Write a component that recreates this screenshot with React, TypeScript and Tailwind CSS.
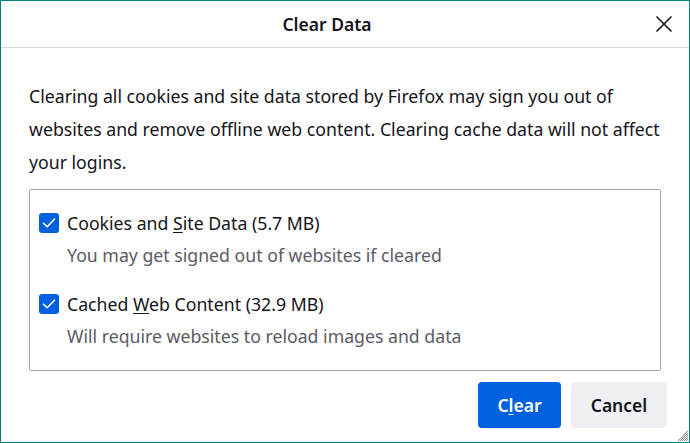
import React from "react";

function Check() {
  return (
    <span className="flex h-[20px] w-[20px] shrink-0 items-center justify-center rounded-[3px] bg-[#0061e0]">
      <svg width="16" height="16" viewBox="0 0 16 16" fill="none">
        <path d="M2.5 8.2 L6.2 11.8 L13.5 4.2" stroke="white" strokeWidth="1.6" strokeLinecap="round" strokeLinejoin="round" />
      </svg>
    </span>
  );
}

export default function App() {
  return (
    <div
      className="relative flex h-[443px] w-[690px] flex-col border border-[#008080] bg-white text-[#15141a]"
      style={{ fontFamily: '"Noto Sans", "Open Sans", sans-serif' }}
    >
      <div className="relative flex h-[47px] shrink-0 items-center justify-center border-b border-[#d7d7db] pr-[36px]">
        <span className="text-[17.5px] font-semibold">Clear Data</span>
        <button className="absolute right-[14px] top-[12px] flex h-[22px] w-[22px] items-center justify-center">
          <svg width="18" height="18" viewBox="0 0 18 18" fill="none">
            <path d="M1.5 1.5 L16.5 16.5 M16.5 1.5 L1.5 16.5" stroke="#15141a" strokeWidth="1.6" />
          </svg>
        </button>
      </div>
      <div className="flex flex-1 flex-col px-[28px] pt-[32px]">
        <p className="text-[17.7px] leading-[33px]">
          Clearing all cookies and site data stored by Firefox may sign you out of websites and remove offline web content. Clearing cache data will not affect your logins.
        </p>
        <div className="mt-[10px] flex h-[182px] flex-col rounded-[2px] border border-[#a8a8ac] pl-[9px] pt-[21px]">
          <div className="flex items-center gap-[8px]">
            <Check />
            <span className="text-[17.7px] leading-[24px]">
              Cookies and <u className="underline-offset-2">S</u>ite Data (5.7 MB)
            </span>
          </div>
          <div className="mt-[8px] pl-[28px] text-[17.7px] leading-[24px] text-[#5b5b66]">
            You may get signed out of websites if cleared
          </div>
          <div className="mt-[25px] flex items-center gap-[8px]">
            <Check />
            <span className="text-[17.7px] leading-[24px]">
              Cached <u className="underline-offset-2">W</u>eb Content (32.9 MB)
            </span>
          </div>
          <div className="mt-[8px] pl-[28px] text-[17.7px] leading-[24px] text-[#5b5b66]">
            Will require websites to reload images and data
          </div>
        </div>
        <div className="mt-[11px] flex justify-end gap-[10px]">
          <button className="h-[46px] w-[83px] rounded-[4px] bg-[#0061e0] text-[17.5px] font-semibold text-white">
            C<u className="underline-offset-2">l</u>ear
          </button>
          <button className="mr-[-6px] h-[46px] w-[96px] rounded-[4px] bg-[#f0f0f4] text-[17.5px] font-semibold text-[#15141a]">
            Cancel
          </button>
        </div>
      </div>
      <svg className="absolute bottom-0 right-0" width="14" height="14" viewBox="0 0 14 14">
        <path d="M13 3 L3 13 M13 7 L7 13 M13 11 L11 13 M13 5 L5 13 M13 9 L9 13" stroke="#8a8a8a" strokeWidth="1" />
      </svg>
    </div>
  );
}
